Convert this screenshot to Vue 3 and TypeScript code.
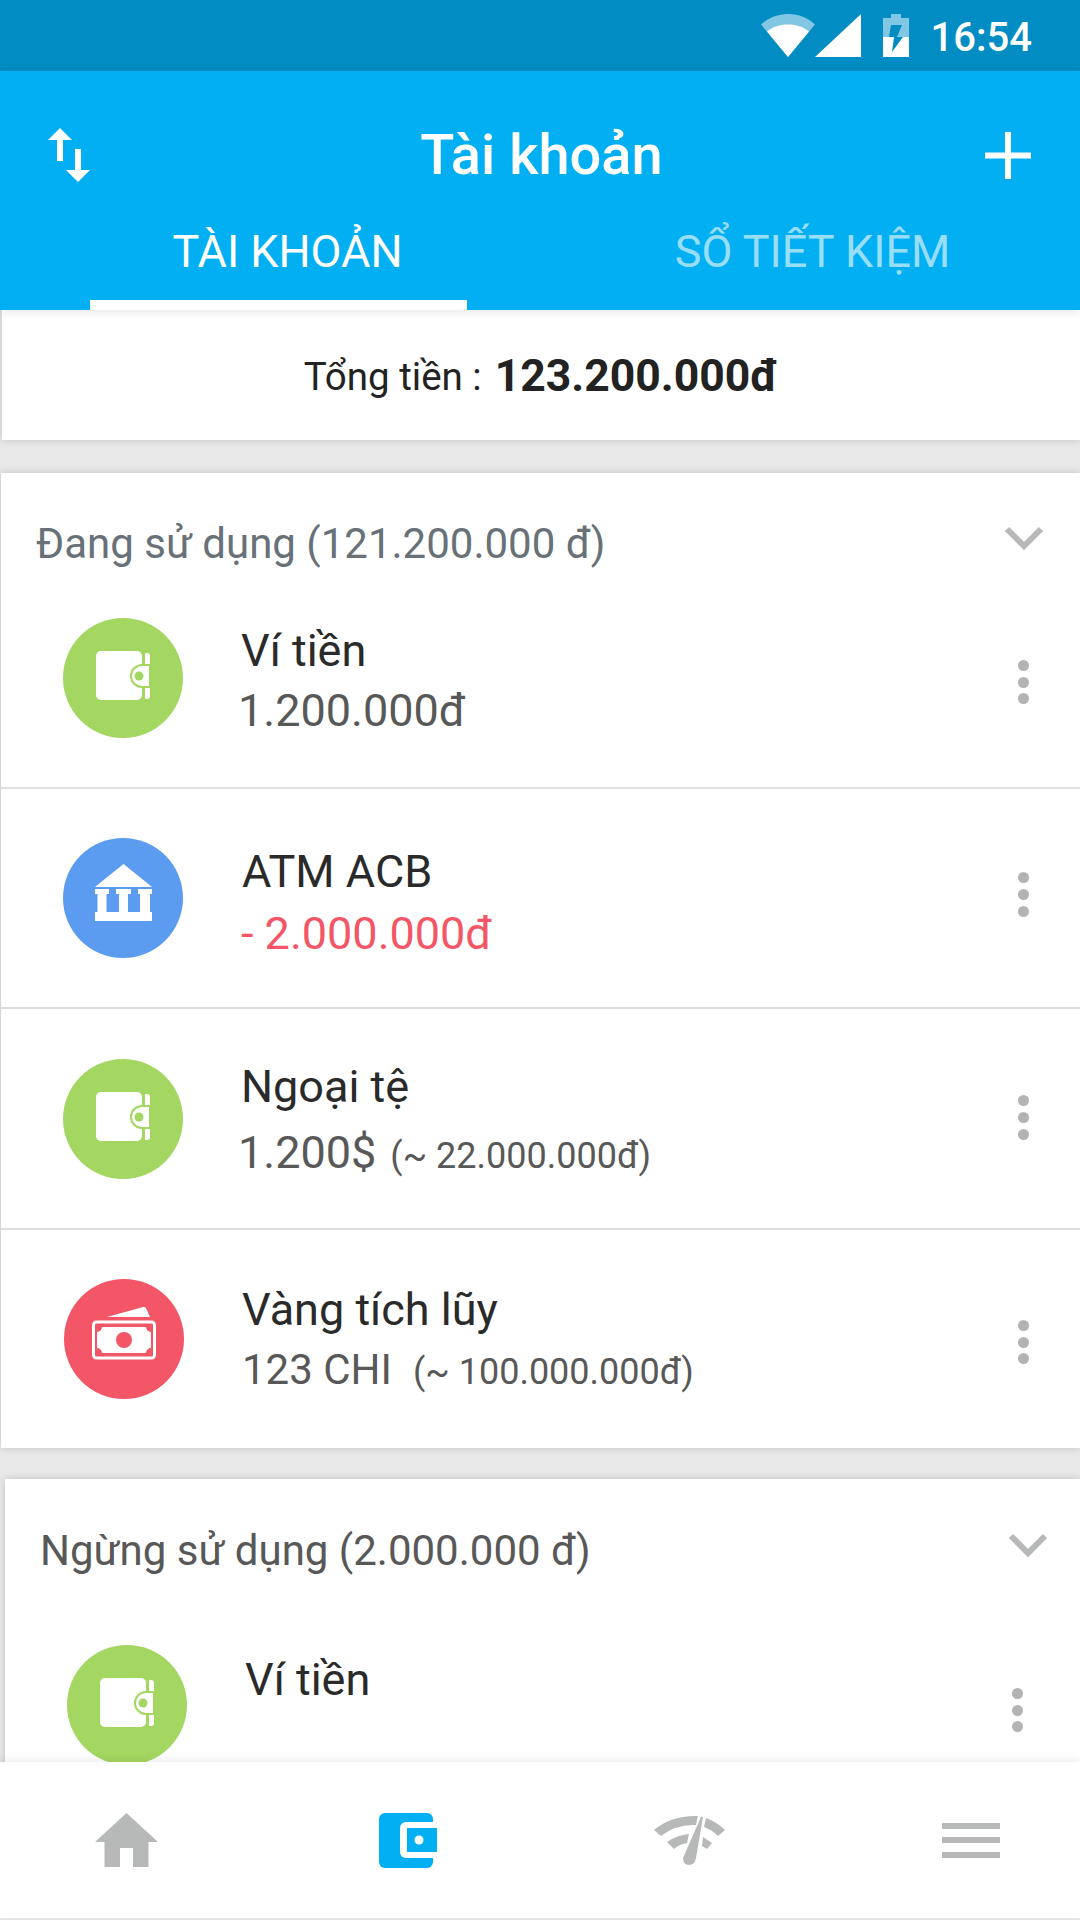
<template>
  <div class="phone">
    <div class="status-bar">
      <svg width="54" height="43" viewBox="0 0 54 43">
        <path d="M0 10.500C7 4 16.500 0 27 0s20 4 27 10.500L27 43z" fill="#fff" fill-opacity="0.5" />
        <path d="M6 17.500C11.500 13 19 10.500 27 10.500s15.500 2.500 21 7L27 43z" fill="#fff" />
      </svg>
      <svg class="signal" width="46" height="43" viewBox="0 0 46 43"><path d="M0 43L46 0v43z" fill="#fff" /></svg>
      <svg class="battery" width="26" height="43" viewBox="0 0 26 43">
        <path d="M8 0h10v4h8v39H0V4h8z" fill="#fff" fill-opacity="0.5" />
        <path d="M0 23h26v20H0z" fill="#fff" />
        <path d="M8 11h11l-5 12h6L9 38l2-15H6z" fill="#028cc4" />
      </svg>
      <span class="clock">16:54</span>
    </div>

    <header class="app-header">
      <div class="title-row">
        <svg width="42" height="54" viewBox="0 0 42 54">
          <path d="M12 0l12 12h-9v21H9V12H0zM30 54L18 42h9V21h6v21h9z" fill="#fff" />
        </svg>
        <h1 class="title">Tài khoản</h1>
        <svg width="46" height="47" viewBox="0 0 46 47">
          <path d="M20 0h6v20.500h20v6H26V47h-6V26.500H0v-6h20z" fill="#fff" />
        </svg>
      </div>
      <div class="tabs">
        <div class="tab active">TÀI KHOẢN</div>
        <div class="tab">SỔ TIẾT KIỆM</div>
      </div>
    </header>

    <main class="content">
      <div class="total">
        <span class="total-label">Tổng tiền :</span>
        <strong class="total-value">123.200.000đ</strong>
      </div>

      <section v-for="group in groups" :key="group.title" class="card" :class="group.cls">
        <div class="card-head">
          <span class="card-title">{{ group.title }}</span>
          <svg class="chevron" width="40" height="25" viewBox="0 0 40 25">
            <path d="M3 3l17 17L37 3" fill="none" stroke="#b7b9b9" stroke-width="6" />
          </svg>
        </div>
        <div v-for="acc in group.items" :key="acc.cls" class="row" :class="acc.cls">
          <div class="avatar" :class="'bg-' + acc.icon">
            <svg v-if="acc.icon === 'wallet'" class="ic-wallet" width="54" height="50" viewBox="0 0 54 50">
              <rect x="0" y="0" width="46" height="49" rx="5" fill="#fff" />
              <path d="M49 2h2a3 3 0 0 1 3 3v9h-5zM49 36h5v9a3 3 0 0 1-3 3h-2z" fill="#fff" />
              <path d="M54 14H46a11 11 0 0 0 0 22h8z" fill="#fff" stroke="#a3d762" stroke-width="2" />
              <circle cx="43" cy="25" r="4.500" fill="#a3d762" />
            </svg>
            <svg v-else-if="acc.icon === 'bank'" class="ic-raised" width="57" height="57" viewBox="0 0 57 57">
              <path d="M28.500 0L57 23H0z" fill="#fff" />
              <path d="M0 25h14v5h-2.500v18H24V30h-3v-5h15v5h-3v18h12V30h-2v-5h14v5h-2v18h2v9H0v-9h2.500V30H0z" fill="#fff" />
            </svg>
            <svg v-else class="ic-raised" width="64" height="54" viewBox="0 0 64 54">
              <path d="M15 11L51 1q2-.5 3 1l4 9z" fill="#fff" />
              <rect x="1.500" y="16" width="61" height="36" rx="3" fill="none" stroke="#fff" stroke-width="3" />
              <path d="M10 21H54a5 5 0 0 0 5 5V42a5 5 0 0 0-5 5H10a5 5 0 0 0-5-5V26a5 5 0 0 0 5-5z" fill="#fff" />
              <circle cx="32" cy="34" r="8" fill="#f25667" />
            </svg>
          </div>
          <div class="info">
            <div class="name">{{ acc.name }}</div>
            <div class="value" :class="{ negative: acc.negative }">
              <span class="amount">{{ acc.value }}</span>
              <span v-if="acc.note" class="note">{{ acc.note }}</span>
            </div>
          </div>
          <div class="kebab"><i></i><i></i><i></i></div>
        </div>
      </section>
    </main>

    <nav class="bottom-nav">
      <svg width="63" height="54" viewBox="0 0 63 54">
        <path d="M31.500 0L63 29H53.500V54H38V35H25V54H9.500V29H0z" fill="#b7b9b9" />
      </svg>
      <svg class="nav-wallet" width="58" height="55" viewBox="0 0 58 55">
        <rect width="54" height="55" rx="6" fill="#02aff2" />
        <rect x="21" y="9" width="40" height="36" rx="6" fill="#fff" />
        <path d="M28 15h30v24H28z" fill="#02aff2" />
        <circle cx="40" cy="27" r="4.500" fill="#fff" />
      </svg>
      <svg width="71" height="50" viewBox="0 0 71 50">
        <path d="M0 15Q18 0 44 1L42 10Q22 9 7 21zM52 3Q63 7 71 15L64 21Q58 15 50 12zM13 27Q23 20 35 19L33 28Q26 29 20 34zM49 22L58 28L53 34L48 31z" fill="#b7b9b9" />
        <path d="M47 2h2L42 43Q41 50 35 50Q29 50 29 43z" fill="#b7b9b9" />
      </svg>
      <div class="menu"><i></i><i></i><i></i></div>
    </nav>
  </div>
</template>

<script setup lang="ts">
interface Account {
  name: string
  value: string
  note?: string
  icon: 'wallet' | 'bank' | 'cash'
  negative?: boolean
  cls: string
}

const groups: { title: string; cls: string; items: Account[] }[] = [
  {
    title: 'Đang sử dụng (121.200.000 đ)',
    cls: 'active',
    items: [
      { name: 'Ví tiền', value: '1.200.000đ', icon: 'wallet', cls: 'r1' },
      { name: 'ATM ACB', value: '- 2.000.000đ', icon: 'bank', negative: true, cls: 'r2' },
      { name: 'Ngoại tệ', value: '1.200$', note: '(~ 22.000.000đ)', icon: 'wallet', cls: 'r3' },
      { name: 'Vàng tích lũy', value: '123 CHI', note: '(~ 100.000.000đ)', icon: 'cash', cls: 'r4' },
    ],
  },
  {
    title: 'Ngừng sử dụng (2.000.000 đ)',
    cls: 'stopped',
    items: [{ name: 'Ví tiền', value: '', icon: 'wallet', cls: 'r5' }],
  },
]
</script>

<style>
html, body { margin: 0; background: #e9e9e9; }
</style>

<style scoped>
.phone {
  width: 1080px;
  height: 1920px;
  display: flex;
  flex-direction: column;
  overflow: hidden;
  font-family: Roboto, "Noto Sans", sans-serif;
  background: #e9e9e9;
}
.status-bar {
  height: 71px;
  flex: none;
  box-sizing: border-box;
  background: #028cc4;
  display: flex;
  align-items: flex-start;
  justify-content: flex-end;
  padding: 14px 48px 0 0;
}
.signal, .battery { margin-right: 22px; }
.clock {
  color: #fff;
  font-size: 40px;
  font-weight: 500;
  line-height: 47px;
}
.app-header {
  height: 239px;
  flex: none;
  background: #02aff2;
  display: flex;
  flex-direction: column;
  justify-content: space-between;
  position: relative;
  box-shadow: 0 2px 10px rgba(0, 0, 0, 0.1);
}
.title-row {
  display: flex;
  align-items: center;
  justify-content: space-between;
  padding: 57px 49px 0 48px;
}
.title {
  margin: 0 0 0 8px;
  color: #fff;
  font-size: 56px;
  font-weight: 500;
  line-height: 54px;
}
.tabs { display: flex; padding-left: 90px; }
.tab {
  height: 88px;
  box-sizing: border-box;
  color: rgba(255, 255, 255, 0.6);
  font-size: 45px;
  line-height: 60px;
  text-align: center;
  flex: 1;
  padding-left: 78px;
}
.tab.active {
  flex: none;
  width: 377px;
  padding-left: 18px;
  color: #fff;
  border-bottom: 10px solid #fff;
}
.content { flex: 1; min-height: 0; overflow: hidden; }
.total {
  height: 130px;
  margin-left: 2px;
  background: #fff;
  display: flex;
  align-items: center;
  justify-content: center;
  gap: 13px;
  box-shadow: 0 0 8px rgba(0, 0, 0, 0.18);
  color: #222;
  padding-top: 2px;
  box-sizing: border-box;
}
.total-label { font-size: 38.5px; }
.total-value { font-size: 44.5px; font-weight: 700; }
.card {
  margin: 33px 0 0 1px;
  background: #fff;
  color: #687078;
  box-shadow: 0 0 8px rgba(0, 0, 0, 0.18);
}
.card.stopped { margin: 31px 0 0 5px; color: #585858; }
.card-head {
  height: 96px;
  box-sizing: border-box;
  display: flex;
  justify-content: space-between;
  padding: 43px 36px 0 35px;
}
.stopped .card-head { height: 116px; padding: 44px 32px 0 35px; }
.card-title {
  font-size: 42px;
  line-height: 56px;
}
.chevron { margin-top: 10px; }
.row {
  height: 220px;
  box-sizing: border-box;
  display: flex;
  align-items: center;
  padding: 0 51px 0 62px;
  border-bottom: 2px solid #dedede;
}
.row:last-child { border-bottom: 0; }
.r3 { height: 221px; }
.r4 { height: 218px; padding-left: 63px; }
.avatar {
  width: 120px;
  height: 120px;
  flex: none;
  border-radius: 50%;
  display: flex;
  align-items: center;
  justify-content: center;
}
.ic-wallet { margin-bottom: 4px; }
.ic-raised { margin-bottom: 12px; }
.bg-wallet { background: #a3d762; }
.bg-bank { background: #5c9cf0; }
.bg-cash { background: #f25667; }
.info { flex: 1; padding-left: 58px; }
.name {
  color: #2a2a2a;
  font-size: 45px;
  line-height: 60px;
}
.value {
  display: flex;
  align-items: baseline;
  gap: 20px;
  color: #585858;
  margin-left: -3px;
  line-height: 60px;
  min-height: 60px;
}
.amount { font-size: 45px; }
.note { font-size: 36px; }
.value.negative { color: #f25667; }
.r1 .info { padding-top: 5px; }
.r1 .value { margin-top: 0; }
.r2 .info { padding-top: 10px; }
.r2 .name { margin-left: 1px; }
.r2 .value { margin: 2px 0 0 0; }
.r3 .info { padding-top: 6px; }
.r3 .value { margin-top: 6px; gap: 14px; }
.r4 .info { padding-top: 3px; }
.r4 .value { margin-left: 0; gap: 21px; }
.r4 .amount { font-size: 42px; }
.r5 .info { padding-top: 10px; }
.r5 { padding-right: 57px; }
.kebab {
  display: flex;
  flex-direction: column;
  gap: 5.67px;
}
.kebab i {
  display: block;
  width: 11px;
  height: 11px;
  border-radius: 50%;
  background: #b3b3b3;
}
.r1 .kebab { margin-top: 8px; }
.r2 .kebab { margin-bottom: 7px; }
.r3 .kebab { margin-bottom: 2px; }
.r4 .kebab { margin-top: 6px; }
.r5 .kebab { margin-top: 10px; }
.bottom-nav {
  height: 156px;
  flex: none;
  box-sizing: border-box;
  margin-bottom: 2px;
  background: #fff;
  display: flex;
  align-items: center;
  gap: 217px;
  padding: 0 0 0 95px;
  position: relative;
  box-shadow: 0 -2px 8px rgba(0, 0, 0, 0.08);
}
.nav-wallet { margin-left: 4px; }
.menu { display: flex; flex-direction: column; gap: 8.5px; }
.menu i { display: block; width: 58px; height: 6px; background: #b7b9b9; }
</style>
